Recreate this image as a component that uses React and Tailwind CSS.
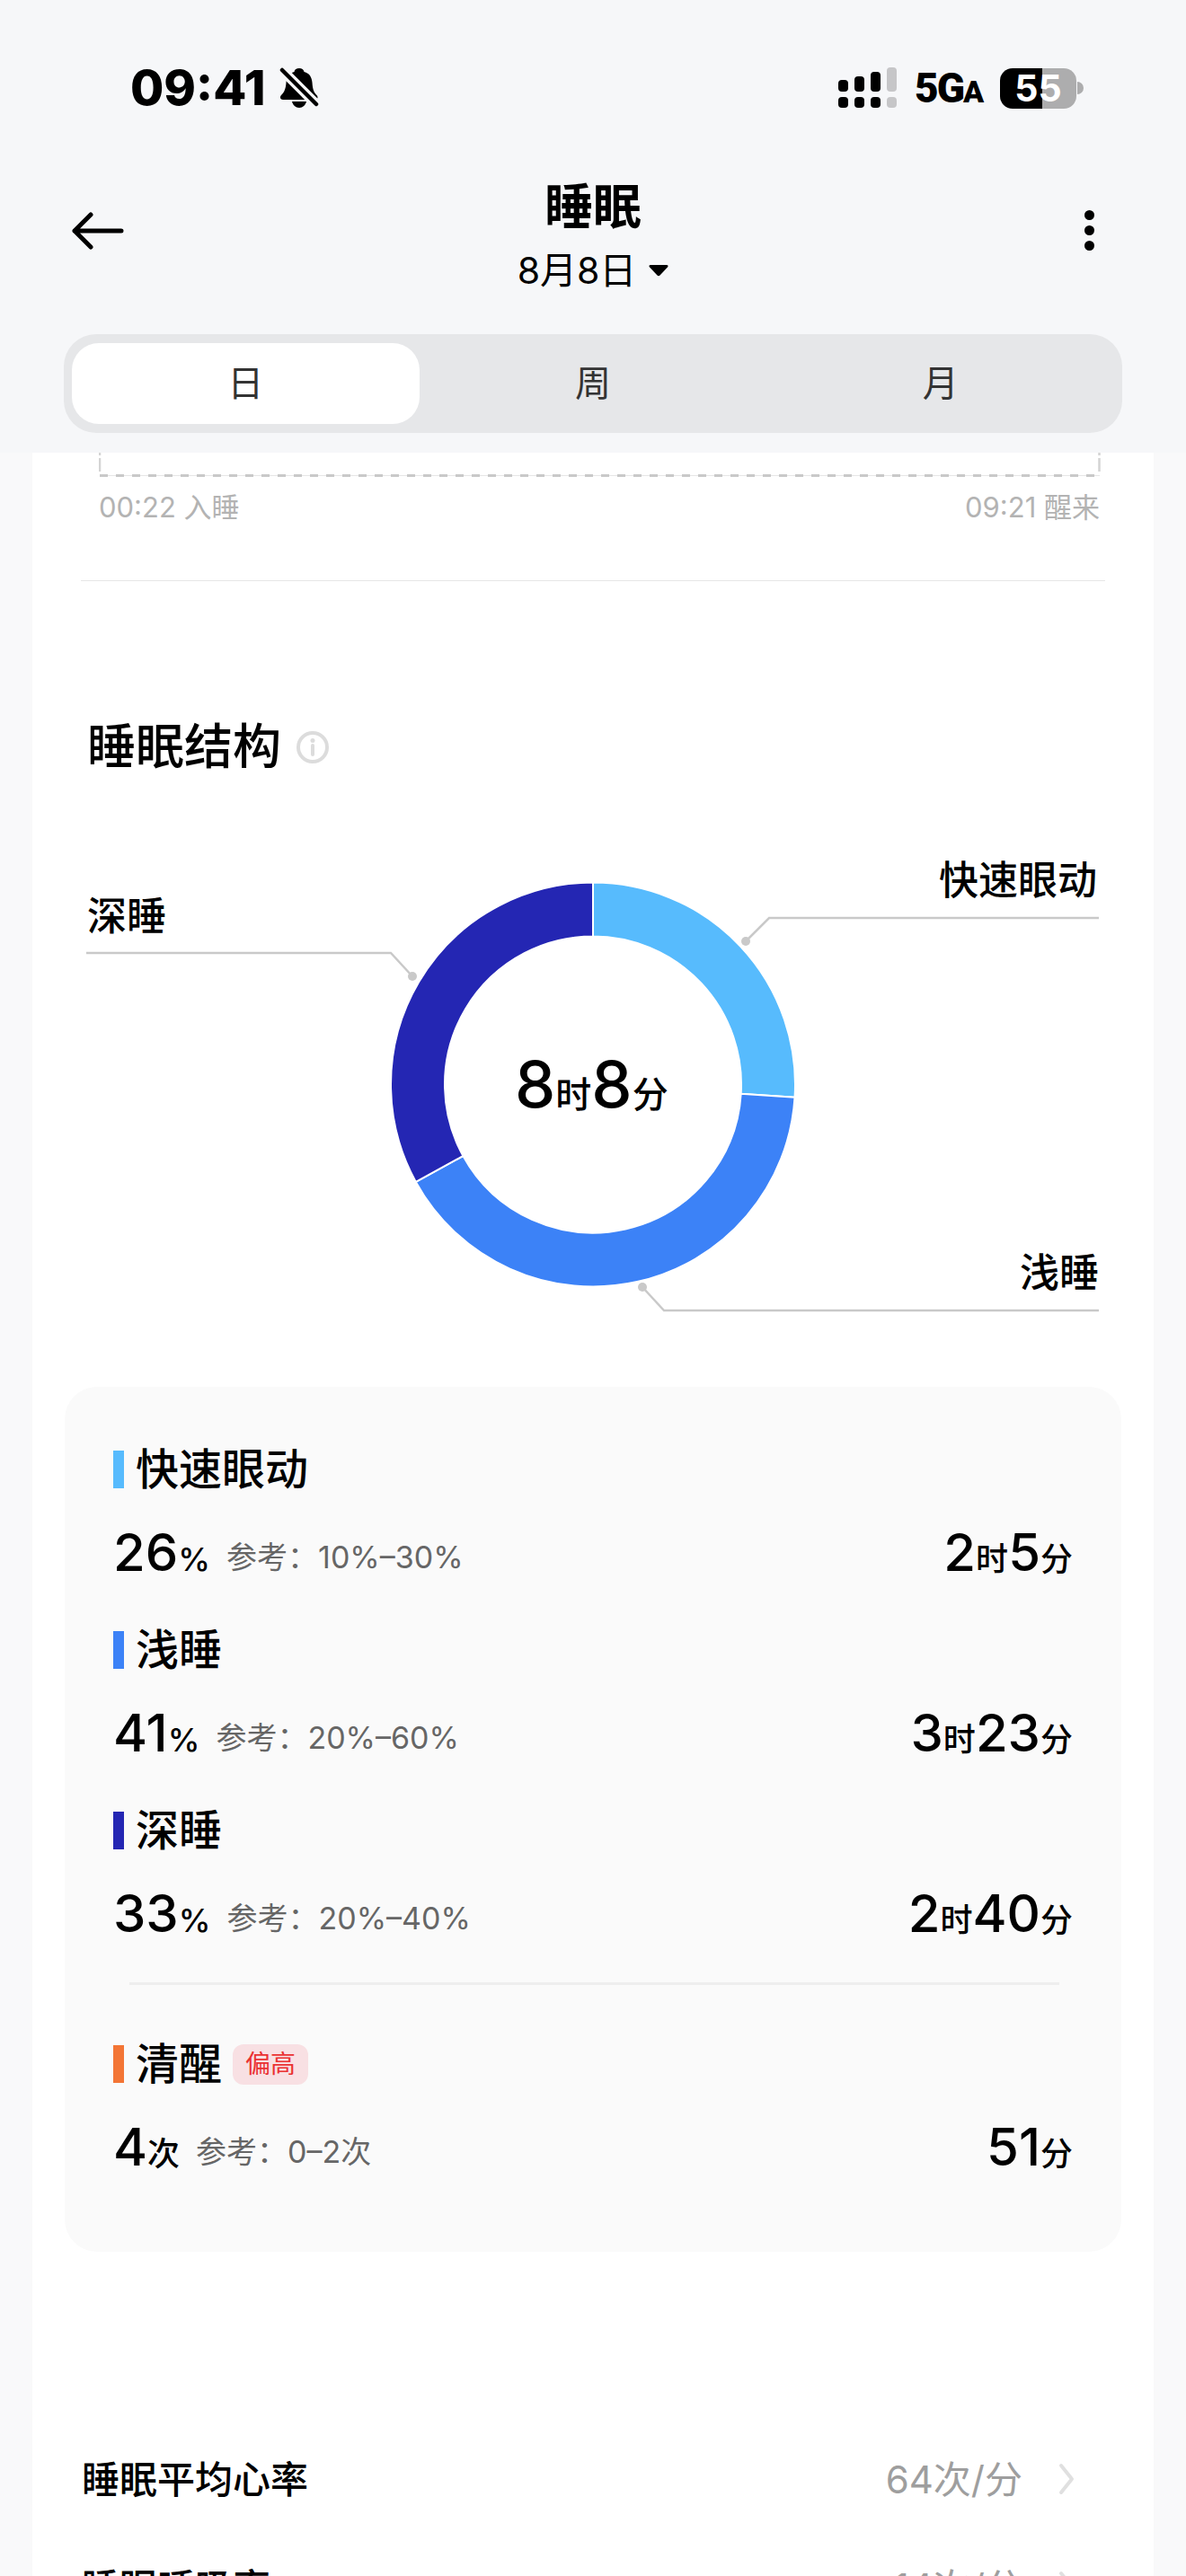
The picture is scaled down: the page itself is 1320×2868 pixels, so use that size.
const Bar = ({ c }) => <span className={`w-[12px] h-[42px] ${c}`} />;

function StatusBar() {
  return (
    <div className="h-[196px] flex items-center justify-between pl-[145px] pr-[114px] text-black">
      <div className="flex items-center gap-[14px]">
        <span className="text-[54px] leading-[60px] font-extrabold">09:41</span>
        <svg width="46" height="46" viewBox="0 0 46 46">
          <path d="M23 1c3 0 5 1.500 5.500 4 6 1.500 8.500 6 9 12 .5 6 1 10 5 14 2 2 1 5-2 5H5c-3 0-4-3-2-5 4-4 5-8 5.500-14 .5-6 3-10.500 9-12C18 2 20 1 23 1z" fill="#000" />
          <path d="M15 38h16c-1 4-4 7-8 7s-7-3-8-7z" fill="#000" />
          <path d="M3 2l40 40" stroke="#f6f7f9" strokeWidth="11" />
          <path d="M4 3l38 38" stroke="#000" strokeWidth="4.500" strokeLinecap="round" />
        </svg>
      </div>
      <div className="flex items-center">
        <svg width="66" height="46" viewBox="0 0 66 46">
          <g fill="#000">
            <rect x="0" y="14" width="11" height="13" rx="4" />
            <rect x="18" y="10" width="11" height="17" rx="4" />
            <rect x="36" y="5" width="11" height="22" rx="4" />
            <rect x="0" y="33" width="11" height="12" rx="4" />
            <rect x="18" y="33" width="11" height="12" rx="4" />
            <rect x="36" y="33" width="11" height="12" rx="4" />
          </g>
          <g fill="#c6c6c8">
            <rect x="54" y="0" width="11" height="27" rx="4" />
            <rect x="54" y="33" width="11" height="12" rx="4" />
          </g>
        </svg>
        <span className="ml-[19px] w-[76px] flex items-baseline font-[Roboto,sans-serif] font-black text-[46px] leading-[46px] tracking-[-2px]">
          5G<span className="text-[34px] leading-[34px]">A</span>
        </span>
        <div className="ml-[19px] relative w-[85px] h-[45px] flex">
          <span className="w-[47px] bg-black rounded-l-[14px]" />
          <span className="flex-1 bg-[#adadae] rounded-r-[14px]" />
          <span className="absolute inset-0 flex items-center justify-center text-white text-[41px] leading-[45px] font-bold">55</span>
        </div>
        <span className="ml-[1px] w-[7px] h-[14px] rounded-r-[7px] bg-[#adadae]" />
      </div>
    </div>
  );
}

function Nav() {
  return (
    <div className="grid grid-cols-[1fr_auto_1fr] items-start mt-[5px] px-[80px]">
      <svg className="mt-[35px]" width="58" height="42" viewBox="0 0 58 42" fill="none" stroke="#000" strokeWidth="5" strokeLinecap="round" strokeLinejoin="round">
        <path d="M55 21H3M21 3 3 21l18 18" />
      </svg>
      <div className="flex flex-col items-center">
        <div className="text-[54px] leading-[60px] font-bold text-black">睡眠</div>
        <div className="mt-[15px] flex items-center gap-[14px] text-[41px] leading-[50px] text-black">
          <span>8月8日</span>
          <svg width="22" height="14" viewBox="0 0 22 14"><path d="M2 1h18c1.500 0 2 1 1.200 2.200L12.500 12.500c-.8 1-2.200 1-3 0L.8 3.200C0 2 .5 1 2 1z" fill="#000" /></svg>
        </div>
      </div>
      <div className="justify-self-end mt-[33px] mr-[22px] flex flex-col gap-[6px]">
        <span className="w-[11px] h-[11px] rounded-full bg-black" />
        <span className="w-[11px] h-[11px] rounded-full bg-black" />
        <span className="w-[11px] h-[11px] rounded-full bg-black" />
      </div>
    </div>
  );
}

function Tabs() {
  return (
    <div className="mt-[46px] mx-[71px] h-[110px] rounded-[36px] bg-[#e6e7e9] px-[9px] py-[10px] grid grid-cols-3 text-[40px] text-[#333]">
      <div className="rounded-[30px] bg-white flex items-center justify-center">日</div>
      <div className="flex items-center justify-center">周</div>
      <div className="flex items-center justify-center">月</div>
    </div>
  );
}

function polar(r, deg) {
  const a = (deg * Math.PI) / 180;
  return [660 + r * Math.sin(a), 1207.5 - r * Math.cos(a)];
}
function seg(from, to) {
  const [a, b] = polar(225, from);
  const [c, d] = polar(225, to);
  const [e, f] = polar(165, to);
  const [g, h] = polar(165, from);
  const large = to - from > 180 ? 1 : 0;
  return `M${a} ${b}A225 225 0 ${large} 1 ${c} ${d}L${e} ${f}A165 165 0 ${large} 0 ${g} ${h}Z`;
}

function Donut() {
  const labels = "absolute text-[44px] leading-[50px] font-medium text-black";
  return (
    <div className="relative mt-[88px] h-[530px]">
      <svg className="absolute inset-0" width="1248" height="530" viewBox="36 950 1248 530">
        <path d={seg(0, 93.6)} fill="#57bbfd" stroke="#fff" strokeWidth="2" />
        <path d={seg(93.6, 241.2)} fill="#3c82f7" stroke="#fff" strokeWidth="2" />
        <path d={seg(241.2, 360)} fill="#2426b3" stroke="#fff" strokeWidth="2" />
        <g fill="none" stroke="#c9c9c9" strokeWidth="2.500">
          <path d="M830 1048 856 1022H1223" />
          <path d="M459 1087 435 1061H96" />
          <path d="M715 1433 739 1459H1223" />
        </g>
        <g fill="#c9c9c9">
          <circle cx="830" cy="1048" r="5" />
          <circle cx="459" cy="1087" r="5" />
          <circle cx="715" cy="1433" r="5" />
        </g>
      </svg>
      <span className={`${labels} left-[1009px] top-[5px]`}>快速眼动</span>
      <span className={`${labels} left-[61px] top-[45px]`}>深睡</span>
      <span className={`${labels} left-[1099px] top-[442px]`}>浅睡</span>
      <div className="absolute left-[537px] top-[215px] flex items-baseline text-black font-medium leading-[84px]">
        <span className="text-[72px]">8</span>
        <span className="text-[40px]">时</span>
        <span className="text-[72px]">8</span>
        <span className="text-[40px]">分</span>
      </div>
    </div>
  );
}

function Title({ c, children, badge }) {
  return (
    <div className="flex items-center h-[42px] gap-[13px]">
      <Bar c={c} />
      <span className="text-[48px] leading-[50px] font-medium text-black">{children}</span>
      {badge && (
        <span className="ml-[-1px] h-[45px] px-[14px] rounded-[12px] bg-[#f8e0e3] text-[#ea3232] text-[28px] leading-[45px]">{badge}</span>
      )}
    </div>
  );
}

function Big({ parts }) {
  return (
    <span className="flex items-baseline text-black font-medium">
      {parts.map((p, i) => (
        <span key={i} className={i % 2 === 0 ? "text-[58px]" : "text-[36px]"}>{p}</span>
      ))}
    </span>
  );
}

function ValueRow({ left, refText, right }) {
  return (
    <div className="mt-[41px] h-[60px] leading-[60px] flex items-baseline justify-between">
      <div className="flex items-baseline">
        <Big parts={left} />
        <span className="ml-[18px] -translate-y-[3px] text-[34px] text-[#666]">{refText}</span>
      </div>
      <Big parts={right} />
    </div>
  );
}

function StatsCard() {
  return (
    <div className="mt-[64px] mx-[36px] h-[963px] rounded-[36px] bg-[#fafafa] pt-[71px] pl-[54px] pr-[54px]">
      <Title c="bg-[#57bbfd]">快速眼动</Title>
      <ValueRow left={["26", "%"]} refText="参考：10%–30%" right={["2", "时", "5", "分"]} />
      <div className="mt-[58px]">
        <Title c="bg-[#3c82f7]">浅睡</Title>
      </div>
      <ValueRow left={["41", "%"]} refText="参考：20%–60%" right={["3", "时", "23", "分"]} />
      <div className="mt-[58px]">
        <Title c="bg-[#2426b3]">深睡</Title>
      </div>
      <ValueRow left={["33", "%"]} refText="参考：20%–40%" right={["2", "时", "40", "分"]} />
      <div className="mt-[47px] ml-[18px] mr-[15px] h-[3px] bg-[#eeeeee]" />
      <div className="mt-[67px]">
        <Title c="bg-[#f37535]" badge="偏高">清醒</Title>
      </div>
      <ValueRow left={["4", "次"]} refText="参考：0–2次" right={["51", "分"]} />
    </div>
  );
}

function ListRow({ label, value }) {
  return (
    <div className="h-[120px] shrink-0 flex items-center justify-between pl-[55px] pr-[88px] text-[42px]">
      <span className="font-medium text-black">{label}</span>
      <span className="flex items-center gap-[40px] text-[#9e9e9e]">
        {value}
        <svg width="18" height="36" viewBox="0 0 18 36" fill="none" stroke="#e0e0e0" strokeWidth="4" strokeLinecap="round" strokeLinejoin="round">
          <path d="M3 3l12 15L3 33" />
        </svg>
      </span>
    </div>
  );
}

export default function App() {
  return (
    <div className="w-[1320px] h-[2868px] overflow-hidden bg-[#f9f9fa] font-[Inter,'Noto_Sans_CJK_SC',sans-serif]">
      <header className="h-[504px] bg-[#f6f7f9]">
        <StatusBar />
        <Nav />
        <Tabs />
      </header>
      <main className="mx-[36px] h-[2364px] bg-white overflow-hidden">
        <svg className="block ml-[74px]" width="1116" height="27" viewBox="0 0 1116 27">
          <path d="M1 25.500H1114" stroke="#e6e6e6" strokeWidth="1" />
          <path d="M1 25.500H1114" stroke="#c9c9c9" strokeWidth="3" strokeDasharray="9 9" />
          <path d="M1 0V22M1113.500 0V22" stroke="#d4d4d4" strokeWidth="2.500" strokeDasharray="3 3 15 9" />
        </svg>
        <div className="mt-[14px] ml-[74px] mr-[60px] flex justify-between text-[31px] leading-[40px] text-[#b3b3b3]">
          <span>00:22 入睡</span>
          <span>09:21 醒来</span>
        </div>
        <div className="mt-[61px] mx-[54px] h-[1px] bg-[#e6e6e6]" />
        <div className="mt-[155px] ml-[61px] flex items-center gap-[17px]">
          <span className="text-[54px] leading-[60px] font-medium text-black">睡眠结构</span>
          <svg width="36" height="36" viewBox="0 0 36 36" fill="none">
            <circle cx="18" cy="18" r="16" stroke="#dcdcdc" strokeWidth="4" />
            <circle cx="18" cy="10.500" r="2.500" fill="#dcdcdc" />
            <path d="M18 16v10" stroke="#dcdcdc" strokeWidth="4" strokeLinecap="round" />
          </svg>
        </div>
        <Donut />
        <StatsCard />
        <div className="mt-[193px]">
          <ListRow label="睡眠平均心率" value="64次/分" />
          <ListRow label="睡眠呼吸率" value="14次/分" />
        </div>
      </main>
    </div>
  );
}
